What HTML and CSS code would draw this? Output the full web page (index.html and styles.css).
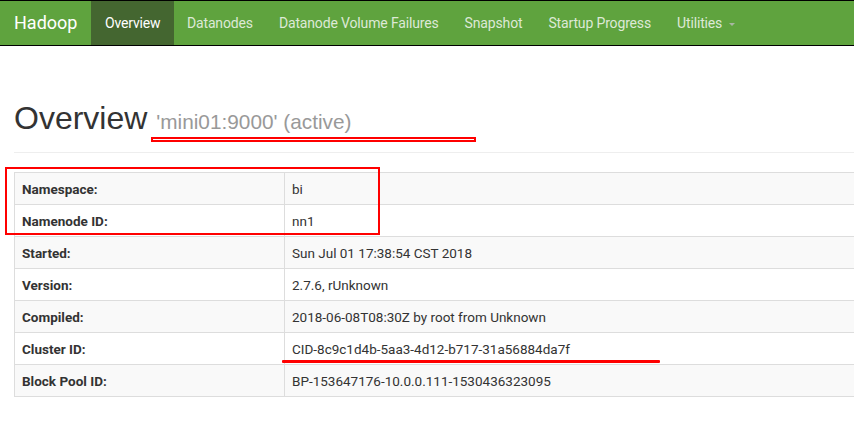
FILE: index.html
```html
<!DOCTYPE html>
<html>
<head>
<meta charset="utf-8">
<title>Namenode information</title>
<link rel="stylesheet" href="styles.css">
</head>
<body>
<header class="navbar">
  <a class="brand">Hadoop</a>
  <nav class="nav">
    <a class="nav-link active">Overview</a>
    <a class="nav-link">Datanodes</a>
    <a class="nav-link">Datanode Volume Failures</a>
    <a class="nav-link">Snapshot</a>
    <a class="nav-link">Startup Progress</a>
    <a class="nav-link">Utilities<span class="caret"></span></a>
  </nav>
</header>
<main class="main">
  <div class="page-header">
    <h1>Overview <small>'mini01:9000' (active)</small></h1>
  </div>
  <table class="info">
    <colgroup><col class="col-label"><col></colgroup>
    <tbody>
      <tr><th>Namespace:</th><td>bi</td></tr>
      <tr><th>Namenode ID:</th><td>nn1</td></tr>
      <tr><th>Started:</th><td>Sun Jul 01 17:38:54 CST 2018</td></tr>
      <tr><th>Version:</th><td>2.7.6, rUnknown</td></tr>
      <tr><th>Compiled:</th><td>2018-06-08T08:30Z by root from Unknown</td></tr>
      <tr><th>Cluster ID:</th><td>CID-8c9c1d4b-5aa3-4d12-b717-31a56884da7f</td></tr>
      <tr><th>Block Pool ID:</th><td>BP-153647176-10.0.0.111-1530436323095</td></tr>
    </tbody>
  </table>
</main>
<div class="mark mark-title"></div>
<div class="mark mark-box"></div>
<div class="mark mark-line"></div>
</body>
</html>
```
FILE: styles.css
```css
html, body {
  overflow: hidden;
}
body {
  margin: 0;
  font-family: Roboto, "Liberation Sans", sans-serif;
  font-size: 14px;
  color: #333;
  background: #fff;
  position: relative;
  width: 854px;
  height: 425px;
}
.navbar {
  display: flex;
  align-items: stretch;
  height: 44px;
  background: #5fa33e;
  border-top: 1px solid #000;
  border-bottom: 1px solid #000;
}
.brand {
  padding: 0 14px 0 14px;
  font-size: 18px;
  line-height: 44px;
  color: #fff;
}
.nav {
  display: flex;
}
.nav-link {
  display: flex;
  align-items: center;
  padding: 0 13px;
  color: #dde9d6;
  white-space: nowrap;
  letter-spacing: -0.15px;
}
.nav-link.active {
  padding: 0 13.5px;
  background: #446630;
  color: #fff;
}
.caret {
  display: inline-block;
  margin-left: 7px;
  margin-top: 2px;
  border-top: 3px solid #a9b7a2;
  border-left: 3px solid transparent;
  border-right: 3px solid transparent;
}
.main {
  margin-left: 14px;
  width: 1140px;
}
.page-header {
  margin-top: 55px;
  padding-bottom: 16px;
  border-bottom: 1px solid #eee;
  margin-bottom: 19px;
}
h1 {
  margin: 0;
  font-family: "Liberation Sans", Arial, sans-serif;
  font-weight: normal;
  font-size: 32px;
  line-height: 35px;
  color: #333;
}
h1 small {
  font-size: 65%;
  line-height: 1;
  color: #999;
}
.info {
  width: 100%;
  border-collapse: collapse;
  border: 1px solid #ddd;
  font-size: 13.5px;
}
.col-label {
  width: 270px;
}
.info th, .info td {
  border: 1px solid #ddd;
  padding: 6px 7px 5px;
  line-height: 20px;
  text-align: left;
  vertical-align: top;
}
.info th {
  font-weight: bold;
}
.info tr:nth-child(odd) th,
.info tr:nth-child(odd) td {
  background: #f9f9f9;
}
.mark {
  position: absolute;
  box-sizing: border-box;
}
.mark-title {
  left: 151px;
  top: 137px;
  width: 325px;
  height: 5px;
  border: 2px solid #f00;
  background: #fff;
}
.mark-box {
  left: 5px;
  top: 167px;
  width: 375px;
  height: 68px;
  border: 2px solid #f00;
}
.mark-line {
  left: 282px;
  top: 360px;
  width: 378px;
  height: 3px;
  background: #f00;
  border-radius: 1px;
}
```
